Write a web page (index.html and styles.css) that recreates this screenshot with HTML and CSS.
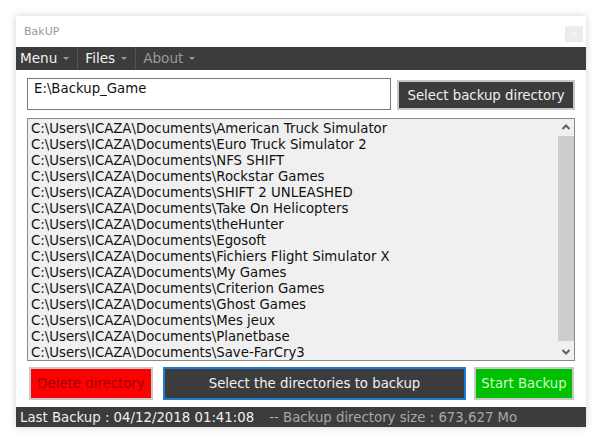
FILE: index.html
```html
<!DOCTYPE html>
<html lang="en">
<head>
  <meta charset="UTF-8" />
  <title>BakUP</title>
  <link rel="stylesheet" href="styles.css">
</head>
<body>
  <div class="window">
    <div class="titlebar">
      <span class="title">BakUP</span>
      <span class="close">x</span>
    </div>

    <div class="menubar">
      <span class="menu">Menu <i class="caret"></i></span>
      <span class="menu">Files <i class="caret"></i></span>
      <span class="menu disabled">About <i class="caret"></i></span>
    </div>

    <div class="content">
      <div class="toprow">
        <div class="pathbox">E:\Backup_Game</div>
        <button class="btn dark">Select backup directory</button>
      </div>

      <div class="listbox">
        <ul class="items">
          <li>C:\Users\ICAZA\Documents\American Truck Simulator</li>
          <li>C:\Users\ICAZA\Documents\Euro Truck Simulator 2</li>
          <li>C:\Users\ICAZA\Documents\NFS SHIFT</li>
          <li>C:\Users\ICAZA\Documents\Rockstar Games</li>
          <li>C:\Users\ICAZA\Documents\SHIFT 2 UNLEASHED</li>
          <li>C:\Users\ICAZA\Documents\Take On Helicopters</li>
          <li>C:\Users\ICAZA\Documents\theHunter</li>
          <li>C:\Users\ICAZA\Documents\Egosoft</li>
          <li>C:\Users\ICAZA\Documents\Fichiers Flight Simulator X</li>
          <li>C:\Users\ICAZA\Documents\My Games</li>
          <li>C:\Users\ICAZA\Documents\Criterion Games</li>
          <li>C:\Users\ICAZA\Documents\Ghost Games</li>
          <li>C:\Users\ICAZA\Documents\Mes jeux</li>
          <li>C:\Users\ICAZA\Documents\Planetbase</li>
          <li>C:\Users\ICAZA\Documents\Save-FarCry3</li>
        </ul>
        <div class="scrollbar">
          <svg class="arrow" width="16" height="16" viewBox="0 0 16 16"><path d="M4.5 10 L8 6.5 L11.5 10" fill="none" stroke="#606060" stroke-width="2"/></svg>
          <div class="track"><div class="thumb"></div></div>
          <svg class="arrow" width="16" height="16" viewBox="0 0 16 16"><path d="M4.5 6 L8 9.5 L11.5 6" fill="none" stroke="#606060" stroke-width="2"/></svg>
        </div>
      </div>

      <div class="actions">
        <button class="btn red">Delete directory</button>
        <button class="btn dark wide">Select the directories to backup</button>
        <button class="btn green">Start Backup</button>
      </div>
    </div>

    <div class="statusbar">
      <span class="last">Last Backup : 04/12/2018 01:41:08</span>
      <span class="size">-- Backup directory size : 673,627 Mo</span>
    </div>
  </div>
</body>
</html>
```

FILE: styles.css
```css
body {
  margin: 0;
  padding: 16px;
  background-color: #fff;
  font-family: "DejaVu Sans", Verdana, sans-serif;
  font-size: 13.3px;
}

.window {
  width: 570px;
  height: 411px;
  background: #fff;
  box-shadow: 0 0 8px rgba(0, 0, 0, 0.18);
  display: flex;
  flex-direction: column;
}

.titlebar {
  height: 31px;
  display: flex;
  align-items: center;
  justify-content: space-between;
  padding: 0 3px 0 8px;
}

.title {
  color: #9a9a9a;
  font-size: 11px;
}

.close {
  width: 18px;
  height: 16px;
  margin-top: 4px;
  background: #ececec;
  color: #fafafa;
  font-size: 9px;
  text-align: center;
  line-height: 16px;
}

.menubar {
  height: 23px;
  background: #3c3c3c;
  display: flex;
  align-items: center;
}

.menu {
  color: #f2f2f2;
  font-size: 13.6px;
  padding: 0 8px 0 4px;
  height: 23px;
  line-height: 23px;
  border-right: 1px solid #555;
  display: flex;
  align-items: center;
  gap: 6px;
}

.menu + .menu {
  padding-left: 7px;
}

.menu.disabled {
  color: #9a9a9a;
  border-right: none;
}

.caret {
  width: 0;
  height: 0;
  border-left: 3px solid transparent;
  border-right: 3px solid transparent;
  border-top: 3px solid #9a9a9a;
}

.content {
  flex: 1;
  padding: 8px 11px 0 11px;
  display: flex;
  flex-direction: column;
}

.toprow {
  display: flex;
  justify-content: space-between;
  align-items: flex-start;
  height: 32px;
}

.pathbox {
  border: 1px solid #7a7a7a;
  padding: 2px 6px;
  box-sizing: border-box;
  width: 364px;
  height: 32px;
  color: #111;
}

.btn {
  font-family: "DejaVu Sans", Verdana, sans-serif;
  font-size: 13.3px;
  border: 2px solid #c8c8c8;
  padding: 0;
  cursor: pointer;
}

.btn.dark {
  background: #3c3c3c;
  color: #f0f0f0;
}

.toprow .btn {
  width: 178px;
  height: 30px;
  margin-top: 2px;
}

.listbox {
  margin-top: 8px;
  height: 243px;
  border: 1px solid #8a8a8a;
  box-sizing: border-box;
  background: #f0f0f0;
  display: flex;
}

.items {
  list-style: none;
  margin: 0;
  padding: 2px 0 0 3px;
  flex: 1;
  line-height: 16px;
  color: #111;
}

.scrollbar {
  width: 16px;
  display: flex;
  flex-direction: column;
}

.arrow {
  display: block;
}

.track {
  flex: 1;
  display: flex;
}

.thumb {
  flex: 1;
  margin: 1px 0 3px 0;
  background: #cdcdcd;
}

.actions {
  margin-top: 6px;
  display: flex;
  gap: 10px;
  padding-left: 2px;
}

.actions .btn {
  height: 33px;
}

.btn.red {
  width: 124px;
  background: #ff0000;
  color: #a00000;
}

.btn.wide {
  width: 303px;
  border-color: #1f7bd0;
}

.btn.green {
  width: 100px;
  margin-left: -2px;
  background: #00c000;
  color: #c8ffc8;
}

.statusbar {
  height: 20px;
  background: #3c3c3c;
  display: flex;
  align-items: center;
  gap: 15px;
  padding-left: 4px;
  margin-top: 7px;
}

.last {
  color: #f0f0f0;
}

.size {
  color: #a8a8a8;
}
```
